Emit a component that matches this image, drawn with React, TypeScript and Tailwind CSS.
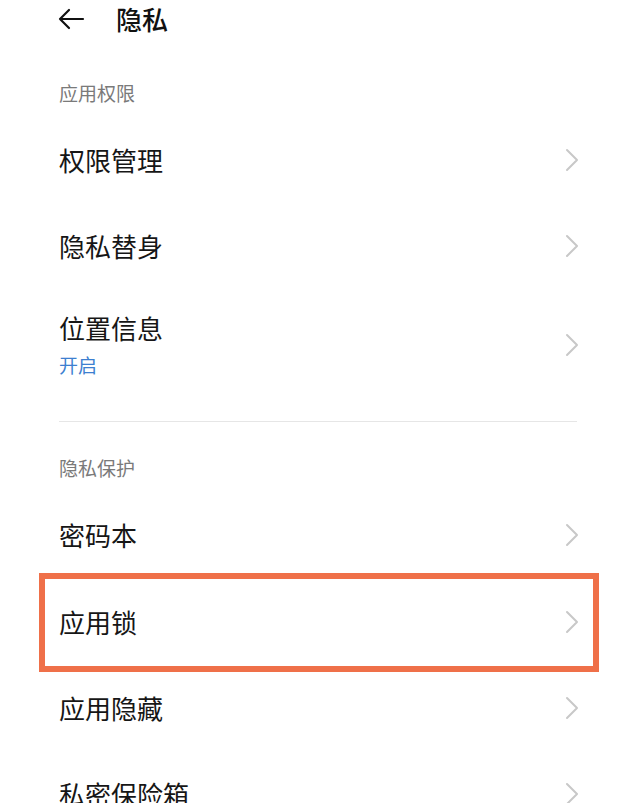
import React from "react"

const Chevron = () => (
  <svg width="14" height="24" viewBox="0 0 14 24" fill="none" className="shrink-0">
    <path d="M2 2 L12 12 L2 22" stroke="#c8c8c8" strokeWidth="2" strokeLinecap="round" strokeLinejoin="round" />
  </svg>
)

function Row({ title, sub, highlight }: { title: string; sub?: string; highlight?: boolean }) {
  if (sub) {
    return (
      <div className="flex items-center justify-between pl-[59px] pr-[45px] pt-[23px] pb-[20px]">
        <div className="flex flex-col">
          <span className="text-[26px] leading-[32px] text-[#161616]">{title}</span>
          <span className="mt-[9px] text-[19px] leading-[24px] text-[#3d7fd0]">{sub}</span>
        </div>
        <Chevron />
      </div>
    )
  }
  return (
    <div className={`relative flex items-center justify-between pl-[59px] pr-[45px] ${highlight ? "h-[87px]" : "h-[86px]"}`}>
      <span className="text-[26px] leading-[32px] text-[#161616]">{title}</span>
      <Chevron />
      {highlight && (
        <div className="pointer-events-none absolute left-[39px] right-[25px] -top-[5px] -bottom-[7px] border-[6px] border-[#ef7049]" />
      )}
    </div>
  )
}

export default function App() {
  return (
    <div
      className="w-[624px] h-[803px] overflow-hidden bg-white"
      style={{ fontFamily: '"Noto Sans CJK SC", "Noto Sans", sans-serif' }}
    >
      <div className="flex h-[38px] items-center pl-[57px]">
        <svg width="28" height="22" viewBox="0 0 28 22" fill="none">
          <path d="M26 11 H3 M12 2 L3 11 L12 20" stroke="#111" strokeWidth="2.2" strokeLinecap="round" strokeLinejoin="round" />
        </svg>
        <span className="ml-[31px] text-[26px] font-medium leading-[32px] text-[#111]">隐私</span>
      </div>

      <div className="flex h-[79px] items-end pb-[12px] pl-[59px]">
        <span className="text-[19px] leading-[24px] text-[#7a7a7a]">应用权限</span>
      </div>
      <Row title="权限管理" />
      <Row title="隐私替身" />
      <Row title="位置信息" sub="开启" />

      <div className="mx-[47px] ml-[59px] mt-[24px] h-px bg-[#e6e6e6]" />

      <div className="flex h-[70px] items-end pb-[12px] pl-[59px]">
        <span className="text-[19px] leading-[24px] text-[#7a7a7a]">隐私保护</span>
      </div>
      <Row title="密码本" highlight={false} />
      <Row title="应用锁" highlight />
      <Row title="应用隐藏" />
      <Row title="私密保险箱" />
    </div>
  )
}
